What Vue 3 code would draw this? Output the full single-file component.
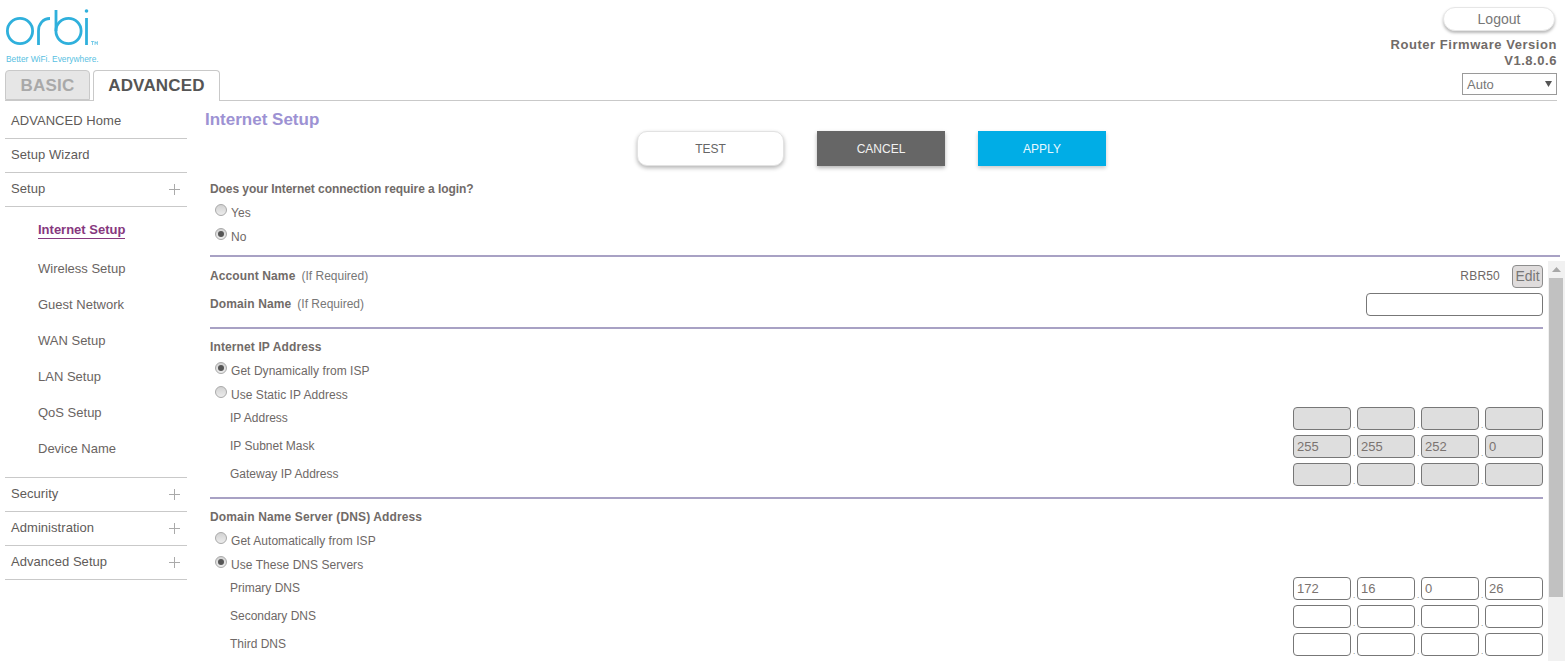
<script setup>
const navTop = [{ label: 'ADVANCED Home' }, { label: 'Setup Wizard' }, { label: 'Setup', plus: true }]
const navSub = ['Wireless Setup', 'Guest Network', 'WAN Setup', 'LAN Setup', 'QoS Setup', 'Device Name']
const navBottom = ['Security', 'Administration', 'Advanced Setup']
const ipRows = [
  { label: 'IP Address', values: ['', '', '', ''] },
  { label: 'IP Subnet Mask', values: ['255', '255', '252', '0'] },
  { label: 'Gateway IP Address', values: ['', '', '', ''] }
]
const dnsRows = [
  { label: 'Primary DNS', values: ['172', '16', '0', '26'] },
  { label: 'Secondary DNS', values: ['', '', '', ''] },
  { label: 'Third DNS', values: ['', '', '', ''] }
]
</script>

<template>
  <div class="page">
    <header class="header">
      <div class="brand">
        <svg class="logo" width="100" height="50" viewBox="0 0 100 50" fill="none" stroke="#2fb0dc" stroke-width="2.8" aria-label="orbi">
          <circle cx="20" cy="31" r="12.6" />
          <path d="M38.5 45V31c0-7 4.5-12.5 11.5-12.5" />
          <path d="M56 10v21" />
          <circle cx="68.5" cy="31" r="12.6" />
          <path d="M86.5 18v27" />
          <circle cx="86.5" cy="11" r="1.8" fill="#2fb0dc" stroke="none" />
          <path d="M91 41.5h3M92.5 41.5v3.5M95 45v-3.5l1.2 2 1.2-2V45" stroke-width=".6" />
        </svg>
        <div class="tagline">Better WiFi. Everywhere.</div>
      </div>
      <div class="account">
        <button class="logout">Logout</button>
        <div class="firmware">Router Firmware Version</div>
        <div class="firmware">V1.8.0.6</div>
      </div>
    </header>

    <div class="tabbar">
      <div class="tab basic">BASIC</div>
      <div class="tab advanced">ADVANCED</div>
      <div class="lang">
        <span>Auto</span>
        <svg width="7" height="6" viewBox="0 0 7 6"><path d="M0 0h7L3.5 6z" fill="#555" /></svg>
      </div>
    </div>

    <div class="body">
      <nav class="side">
        <div v-for="n in navTop" :key="n.label" class="nav-row">
          {{ n.label }}
          <span v-if="n.plus" class="plus"></span>
        </div>
        <div class="sub">
          <div class="sub-item current"><span>Internet Setup</span></div>
          <div v-for="s in navSub" :key="s" class="sub-item">{{ s }}</div>
        </div>
        <div v-for="n in navBottom" :key="n" class="nav-row">
          {{ n }}
          <span class="plus"></span>
        </div>
      </nav>

      <main class="main">
        <h1 class="title">Internet Setup</h1>
        <div class="actions">
          <button class="btn test">TEST</button>
          <button class="btn cancel">CANCEL</button>
          <button class="btn apply">APPLY</button>
        </div>
        <div class="login">
          <div class="strong q">Does your Internet connection require a login?</div>
          <label class="radio-row"><i class="radio"></i>Yes</label>
          <label class="radio-row"><i class="radio on"></i>No</label>
        </div>
        <div class="rule first"></div>

        <div class="scroll">
          <div class="content">
            <div class="acct-row">
              <span><b class="strong">Account Name</b><span class="hint">(If Required)</span></span>
              <span class="acct-val">RBR50<button class="edit">Edit</button></span>
            </div>
            <div class="acct-row domain">
              <span><b class="strong">Domain Name</b><span class="hint">(If Required)</span></span>
              <span class="box wide"></span>
            </div>
            <div class="rule"></div>

            <div class="strong head">Internet IP Address</div>
            <label class="radio-row"><i class="radio on"></i>Get Dynamically from ISP</label>
            <label class="radio-row"><i class="radio"></i>Use Static IP Address</label>
            <div class="ip-group">
              <div v-for="r in ipRows" :key="r.label" class="ip-row">
                <span class="ip-label">{{ r.label }}</span>
                <span class="octets">
                  <template v-for="(v, i) in r.values" :key="i">
                    <span v-if="i" class="dot">.</span>
                    <span class="box octet off">{{ v }}</span>
                  </template>
                </span>
              </div>
            </div>
            <div class="rule second"></div>

            <div class="strong head">Domain Name Server (DNS) Address</div>
            <label class="radio-row"><i class="radio"></i>Get Automatically from ISP</label>
            <label class="radio-row"><i class="radio on"></i>Use These DNS Servers</label>
            <div class="ip-group">
              <div v-for="r in dnsRows" :key="r.label" class="ip-row">
                <span class="ip-label">{{ r.label }}</span>
                <span class="octets">
                  <template v-for="(v, i) in r.values" :key="i">
                    <span v-if="i" class="dot">.</span>
                    <span class="box octet">{{ v }}</span>
                  </template>
                </span>
              </div>
            </div>
          </div>
          <div class="scrollbar">
            <svg class="arrow" width="9" height="5" viewBox="0 0 9 5"><path d="M0 5L4.5 0 9 5z" fill="#a8a8a8" /></svg>
            <div class="thumb"></div>
          </div>
        </div>
      </main>
    </div>
  </div>
</template>

<style>
html, body { margin: 0; background: #fff; overflow: hidden; }
</style>

<style scoped>
.page {
  height: 661px;
  overflow: hidden;
  font-family: "Liberation Sans", Arial, sans-serif;
  font-size: 12px;
  color: #6e6866;
  background: #fff;
}
.header {
  height: 70px;
  display: flex;
  justify-content: space-between;
  padding: 0 8px 0 0;
}
.logo { display: block; }
.tagline {
  margin: 5px 0 0 6px;
  font-size: 8.4px;
  line-height: 9px;
  color: #58bfe2;
}
.account {
  display: flex;
  flex-direction: column;
  align-items: flex-end;
  padding-top: 7px;
}
.logout {
  width: 112px;
  height: 24px;
  margin-right: 2px;
  margin-bottom: 6px;
  border: 1px solid #e6e6e6;
  border-radius: 12px;
  background: #fff;
  box-shadow: 0 2px 3px rgba(0, 0, 0, .28);
  font: 14px "Liberation Sans", Arial, sans-serif;
  color: #777;
  padding: 0;
}
.firmware {
  font-size: 13px;
  line-height: 16px;
  font-weight: 700;
  letter-spacing: .55px;
  color: #716b68;
}
.tabbar {
  position: relative;
  margin: 0 8px 0 5px;
  height: 30px;
  display: flex;
  gap: 3px;
  border-bottom: 1px solid #c9c9c9;
}
.tab {
  height: 30px;
  box-sizing: border-box;
  border: 1px solid #c9c9c9;
  border-radius: 4px 4px 0 0;
  font-size: 17px;
  letter-spacing: .2px;
  line-height: 29px;
  font-weight: 700;
  text-align: center;
}
.basic { width: 85px; background: #e6e6e6; color: #a9a9a9; }
.advanced {
  width: 127px;
  height: 31px;
  background: #fff;
  color: #555;
  border-bottom: none;
}
.lang {
  position: absolute;
  right: 0;
  top: 3px;
  width: 95px;
  height: 22px;
  box-sizing: border-box;
  border: 1px solid #9a9a9a;
  display: flex;
  align-items: center;
  justify-content: space-between;
  padding: 0 4px;
  font-size: 13px;
  color: #777;
}
.body { display: flex; }
.side {
  width: 182px;
  margin-left: 5px;
  margin-right: 18px;
  flex: none;
  padding-top: 4px;
}
.nav-row {
  position: relative;
  height: 33px;
  line-height: 31px;
  padding-left: 6px;
  font-size: 13px;
  letter-spacing: .05px;
  color: #605b59;
  border-bottom: 1px solid #c9c9c9;
}
.plus {
  position: absolute;
  right: 7px;
  top: 11px;
  width: 11px;
  height: 11px;
  background:
    linear-gradient(#aaa, #aaa) center / 11px 1px no-repeat,
    linear-gradient(#aaa, #aaa) center / 1px 11px no-repeat;
}
.sub { padding: 4px 0 10px 33px; border-bottom: 1px solid #c9c9c9; }
.sub-item {
  height: 36px;
  line-height: 36px;
  font-size: 13px;
  color: #6a6462;
}
.sub-item.current { height: 40px; line-height: 38px; font-weight: 700; color: #86387e; }
.sub-item.current span { border-bottom: 1px solid #86387e; padding-bottom: 1px; }
.main { flex: 1; min-width: 0; }
.title {
  margin: 0;
  padding-top: 9px;
  height: 21px;
  line-height: 20px;
  font-size: 17px;
  font-weight: 700;
  color: #9d92d3;
}
.actions {
  display: flex;
  padding-left: 432px;
  height: 36px;
}
.btn {
  height: 35px;
  font: 12px "Liberation Sans", Arial, sans-serif;
  padding: 0;
  border: none;
}
.test {
  width: 147px;
  margin-right: 33px;
  background: #fff;
  border: 1px solid #e2e2e2;
  border-radius: 10px;
  color: #666;
  box-shadow: 0 2px 4px rgba(0, 0, 0, .3);
}
.cancel {
  width: 128px;
  margin-right: 33px;
  background: #666;
  color: #f2f2f2;
  box-shadow: 0 2px 4px rgba(0, 0, 0, .3);
}
.apply {
  width: 128px;
  background: #00ade6;
  color: #e8f8ff;
  box-shadow: 0 2px 4px rgba(0, 0, 0, .22);
}
.login { padding: 14px 0 0 5px; }
.strong { font-weight: 700; color: #716b68; letter-spacing: .12px; }
.q { line-height: 16px; height: 16px; margin-bottom: 4px; letter-spacing: -.07px; }
.radio-row {
  display: flex;
  align-items: center;
  height: 24px;
  padding-left: 5px;
  letter-spacing: .05px;
  color: #6e6866;
}
.radio {
  width: 10px;
  height: 10px;
  margin: -6px 4px 0 0;
  border: 1px solid #a9a9a9;
  border-radius: 50%;
  background: linear-gradient(#d2d2d2, #ececec);
  position: relative;
}
.radio.on::after {
  content: "";
  position: absolute;
  inset: 2px;
  border-radius: 50%;
  background: #555;
}
.rule { height: 2px; background: #a8a1c4; margin-right: 17px; }
.rule.first { margin: 6px 5px 0 5px; }
.scroll {
  display: flex;
  height: 404px;
  margin-top: 4px;
  overflow: hidden;
}
.content { flex: 1; min-width: 0; padding: 2px 5px 0; }
.content .rule { margin-right: 0; margin-top: 8px; }
.content .rule.second { margin-top: 9px; }
.acct-row {
  display: flex;
  align-items: center;
  justify-content: space-between;
  height: 26px;
}
.acct-row.domain { height: 30px; }
.hint { margin-left: 6px; color: #777; }
.acct-val { display: flex; align-items: center; gap: 12px; letter-spacing: .2px; color: #6e6866; }
.edit {
  width: 31px;
  height: 23px;
  padding: 0;
  border: 1px solid #8d8d8d;
  border-radius: 4px;
  background: #dfdcdc;
  font: 14px "Liberation Sans", Arial, sans-serif;
  color: #777;
}
.box {
  display: block;
  box-sizing: border-box;
  height: 23px;
  border: 1px solid #777;
  border-radius: 4px;
  background: #fff;
  font-size: 13px;
  line-height: 21px;
  padding-left: 3px;
  color: #7a7370;
}
.wide { width: 177px; }
.head { height: 16px; line-height: 16px; padding-top: 10px; margin-bottom: 4px; }
.ip-group { margin-top: -3px; }
.ip-row {
  display: flex;
  align-items: center;
  justify-content: space-between;
  height: 28px;
  padding-left: 20px;
}
.ip-label { color: #6e6866; }
.octets { display: flex; align-items: flex-end; }
.octet { width: 58px; }
.octet.off { background: #dedede; }
.dot {
  width: 6px;
  font-size: 8px;
  line-height: 8px;
  text-align: center;
  color: #666;
}
.scrollbar {
  width: 17px;
  flex: none;
  background: #f1f1f1;
  position: relative;
  padding-top: 17px;
  box-sizing: border-box;
}
.arrow { position: absolute; top: 6px; left: 4px; }
.thumb { width: 14px; height: 319px; margin-left: 1px; background: #c1c1c1; }
</style>
